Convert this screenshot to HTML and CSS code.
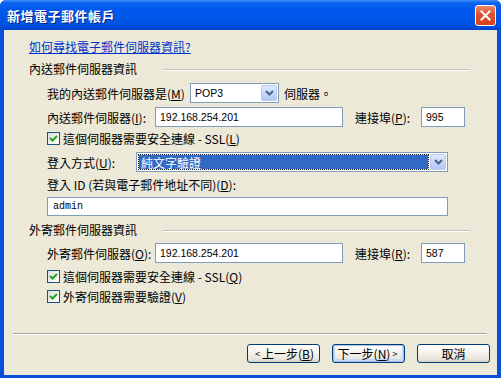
FILE: index.html
```html
<!DOCTYPE html>
<html lang="zh-Hant">
<head>
    <meta charset="utf-8">
    <title>新增電子郵件帳戶</title>
    <link rel="stylesheet" href="styles.css">
</head>
<body>
    <div class="window">
        <div class="titlebar">
            <span class="title">新增電子郵件帳戶</span>
            <span class="close-btn">
                <svg width="11" height="11" viewBox="0 0 11 11"><path d="M1.5 1.5 L9.5 9.5 M9.5 1.5 L1.5 9.5" stroke="#fff" stroke-width="2" stroke-linecap="square"/></svg>
            </span>
        </div>
        <div class="client">
            <div class="main">
                <div class="link-row"><a class="help-link" href="#">如何尋找電子郵件伺服器資訊?</a></div>

                <!-- 內送 -->
                <div class="group">
                    <span class="group-title">內送郵件伺服器資訊</span>
                    <span class="group-line"></span>
                </div>
                <div class="row row-m">
                    <span class="lbl lbl-m">我的內送郵件伺服器是(<u>M</u>)</span>
                    <div class="combo combo-pop">
                        <span class="combo-text">POP3</span>
                        <span class="combo-btn"><svg width="9" height="6" viewBox="0 0 9 6"><path d="M1 1 L4.5 4.5 L8 1" fill="none" stroke="#4d6185" stroke-width="2"/></svg></span>
                    </div>
                    <span class="after">伺服器。</span>
                </div>
                <div class="row row-server">
                    <span class="lbl lbl-server">內送郵件伺服器(<u>I</u>):</span>
                    <div class="field field-server">192.168.254.201</div>
                    <span class="lbl lbl-port">連接埠(<u>P</u>):</span>
                    <div class="field field-port">995</div>
                </div>
                <div class="check-row check-first">
                    <span class="checkbox"><svg width="9" height="9" viewBox="0 0 9 9"><path d="M1 4 L3.5 6.5 L8 2" fill="none" stroke="#21a121" stroke-width="2"/></svg></span>
                    <span class="check-text">這個伺服器需要安全連線 - SSL(<u>L</u>)</span>
                </div>
                <div class="row row-login">
                    <span class="lbl lbl-login">登入方式(<u>U</u>):</span>
                    <div class="combo combo-login">
                        <span class="combo-text selected">純文字驗證</span>
                        <span class="combo-btn"><svg width="9" height="6" viewBox="0 0 9 6"><path d="M1 1 L4.5 4.5 L8 1" fill="none" stroke="#4d6185" stroke-width="2"/></svg></span>
                    </div>
                </div>
                <div class="row row-id">
                    <span class="lbl">登入 ID (若與電子郵件地址不同)(<u>D</u>):</span>
                </div>
                <div class="row row-admin">
                    <div class="field field-admin">admin</div>
                </div>

                <!-- 外寄 -->
                <div class="group group-out">
                    <span class="group-title">外寄郵件伺服器資訊</span>
                    <span class="group-line"></span>
                </div>
                <div class="row row-out">
                    <span class="lbl lbl-server">外寄郵件伺服器(<u>O</u>):</span>
                    <div class="field field-server">192.168.254.201</div>
                    <span class="lbl lbl-port">連接埠(<u>R</u>):</span>
                    <div class="field field-port">587</div>
                </div>
                <div class="check-row check-out">
                    <span class="checkbox"><svg width="9" height="9" viewBox="0 0 9 9"><path d="M1 4 L3.5 6.5 L8 2" fill="none" stroke="#21a121" stroke-width="2"/></svg></span>
                    <span class="check-text">這個伺服器需要安全連線 - SSL(<u>Q</u>)</span>
                </div>
                <div class="check-row">
                    <span class="checkbox"><svg width="9" height="9" viewBox="0 0 9 9"><path d="M1 4 L3.5 6.5 L8 2" fill="none" stroke="#21a121" stroke-width="2"/></svg></span>
                    <span class="check-text">外寄伺服器需要驗證(<u>V</u>)</span>
                </div>
            </div>

            <div class="footer">
                <div class="separator"></div>
                <div class="buttons">
                    <button class="btn"><span class="arrow">&lt;</span> 上一步(<u>B</u>)</button>
                    <button class="btn btn-default">下一步(<u>N</u>) <span class="arrow">&gt;</span></button>
                    <button class="btn">取消</button>
                </div>
            </div>
        </div>
    </div>
</body>
</html>
```

FILE: styles.css
```css
body {
    margin: 0;
    width: 501px;
    height: 378px;
    overflow: hidden;
    background: #fff;
    font-family: "Noto Sans CJK TC", "Noto Sans", sans-serif;
    font-size: 12px;
    color: #000;
}

.window {
    display: flex;
    flex-direction: column;
    width: 501px;
    height: 378px;
    background: #0a4fdc;
    border-radius: 6px 6px 0 0;
    overflow: hidden;
}

/* 타이틀바 */
.titlebar {
    height: 30px;
    flex: none;
    display: flex;
    align-items: center;
    justify-content: space-between;
    padding: 0 5px 0 7px;
    background: linear-gradient(to bottom, #3c8ef8 0, #0d62f0 3px, #0058ee 9px, #0055e6 22px, #0049d6 28px, #0040c8 30px);
}
.title {
    color: #fff;
    font-weight: bold;
    font-size: 13px;
    letter-spacing: 0.5px;
    text-shadow: 1px 1px 0 #0a1f8a;
}
.close-btn {
    width: 19px;
    height: 19px;
    display: flex;
    align-items: center;
    justify-content: center;
    border: 1px solid #fff;
    border-radius: 3px;
    background: linear-gradient(to bottom, #e98a6c 0, #e0532f 40%, #d5401c 100%);
    margin-top: 1px;
}

/* 본문 */
.client {
    flex: 1;
    display: flex;
    flex-direction: column;
    margin: 0 4px 3px 4px;
    background: #ece9d8;
    padding-top: 6px;
}
.main {
    display: flex;
    flex-direction: column;
    padding: 0 27px 0 25px;
}
.link-row {
    height: 20px;
    display: flex;
    align-items: center;
}
.help-link {
    color: #0033cc;
    text-decoration: underline;
}

.group {
    height: 20px;
    margin-top: 2px;
    display: flex;
    align-items: center;
}
.group-out {
    margin-top: 3px;
}
.group-title {
    width: 134px;
    flex: none;
}
.group-line {
    flex: 1;
    height: 0;
    border-top: 1px solid #c5c2b2;
    border-bottom: 1px solid #fff;
    margin-top: 3px;
}

.row {
    height: 22px;
    display: flex;
    align-items: center;
    padding-left: 18px;
}
.row-m { margin-top: 4px; }
.row-server { margin-top: 2px; }
.row-login { margin-top: 3px; }
.row-id { height: 20px; margin-top: 1px; }
.row-admin { height: 20px; margin-top: 2px; }
.row-out { margin-top: 3px; }

.lbl { flex: none; }
.lbl-m { width: 143px; }
.lbl-server { width: 108px; }
.lbl-port { width: 66px; margin-left: 12px; }
.lbl-login { width: 89px; }
.after { margin-left: 5px; }

.field {
    box-sizing: border-box;
    height: 20px;
    border: 1px solid #7f9db9;
    background: #fff;
    padding-left: 4px;
    display: flex;
    align-items: center;
    font-family: "Liberation Sans", Arial, sans-serif;
    font-size: 10.5px;
}
.field-server { width: 188px; }
.field-port { width: 44px; }
.field-admin {
    width: 401px;
    height: 19px;
    font-family: "Liberation Mono", monospace;
    font-size: 10px;
    padding-left: 5px;
}

.combo {
    box-sizing: border-box;
    height: 20px;
    border: 1px solid #7f9db9;
    background: #fff;
    display: flex;
    align-items: stretch;
    padding: 1px;
}
.combo-pop { width: 89px; }
.combo-login { width: 312px; }
.combo-text {
    flex: 1;
    display: flex;
    align-items: center;
    padding-left: 3px;
    font-family: "Liberation Sans", Arial, sans-serif;
    font-size: 10.5px;
}
.combo-text.selected {
    font-family: "Noto Sans CJK TC", sans-serif;
    font-size: 12px;
    background: #316ac5;
    color: #fff;
    outline: 1px dotted #1a1a1a;
    margin: 1px 2px 1px 1px;
    padding-left: 2px;
}
.combo-btn {
    width: 16px;
    flex: none;
    display: flex;
    align-items: center;
    justify-content: center;
    border: 1px solid #b9cbf3;
    border-radius: 2px;
    background: linear-gradient(to bottom, #dfe9fd 0, #c7d7fb 50%, #b3c7f5 100%);
    box-sizing: border-box;
}

.check-row {
    height: 20px;
    display: flex;
    align-items: center;
    padding-left: 18px;
}
.check-out {
    height: 19px;
    margin-top: 3px;
}
.checkbox {
    box-sizing: border-box;
    width: 13px;
    height: 13px;
    border: 1px solid #1c5180;
    background: linear-gradient(135deg, #dcdcd7 0, #f4f4f0 60%, #fff 100%);
    display: flex;
    align-items: center;
    justify-content: center;
    flex: none;
}
.check-text {
    margin-left: 3px;
}

/* 하단 버튼 */
.footer {
    margin-top: auto;
    padding-bottom: 12px;
}
.separator {
    margin: 0 10px 0 9px;
    border-top: 1px solid #aca899;
    border-bottom: 1px solid #fff;
}
.buttons {
    display: flex;
    justify-content: flex-end;
    gap: 12px;
    margin: 9px 7px 0 0;
}
.btn {
    box-sizing: border-box;
    width: 73px;
    height: 19px;
    padding: 0;
    border: 1px solid #003c74;
    border-radius: 3px;
    background: linear-gradient(to bottom, #fff 0, #f5f4ef 40%, #e9e7de 80%, #d6d0c5 100%);
    font-family: "Noto Sans CJK TC", sans-serif;
    font-size: 12px;
    color: #000;
    display: flex;
    align-items: center;
    justify-content: center;
}
.btn-default {
    box-shadow: inset 0 0 0 1px #a9c4ee, inset 0 -1px 0 2px #c6daf7;
}
.arrow {
    font-size: 9px;
    margin: 0 2px;
}
```
